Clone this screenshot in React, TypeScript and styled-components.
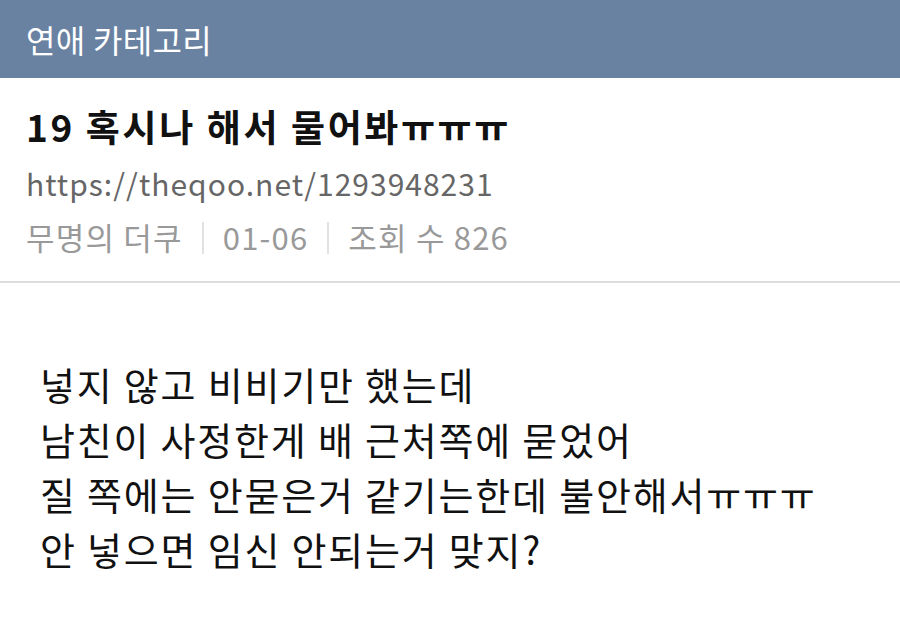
import * as React from "react";
import styled, { createGlobalStyle } from "styled-components";

const GlobalStyle = createGlobalStyle`
  html, body {
    margin: 0;
    padding: 0;
    background: #ffffff;
  }
  body {
    font-family: "Noto Sans CJK KR", "Noto Sans", sans-serif;
  }
`;

const post = {
  category: "연애 카테고리",
  title: "19 혹시나 해서 물어봐ㅠㅠㅠ",
  url: "https://theqoo.net/1293948231",
  author: "무명의 더쿠",
  date: "01-06",
  views: "조회 수 826",
  body: [
    "넣지 않고 비비기만 했는데",
    "남친이 사정한게 배 근처쪽에 묻었어",
    "질 쪽에는 안묻은거 같기는한데 불안해서ㅠㅠㅠ",
    "안 넣으면 임신 안되는거 맞지?",
  ],
};

function App() {
  return (
    <>
      <GlobalStyle />
      <Page>
        <Header>{post.category}</Header>
        <Info>
          <Title>{post.title}</Title>
          <Url>{post.url}</Url>
          <Meta>
            <span>{post.author}</span>
            <Sep />
            <span>{post.date}</span>
            <Sep />
            <span>{post.views}</span>
          </Meta>
        </Info>
        <Body>
          {post.body.map((line) => (
            <Line key={line}>{line}</Line>
          ))}
        </Body>
      </Page>
    </>
  );
}

export default App;

const Page = styled.div`
  width: 900px;
  min-height: 636px;
  background: #fff;
`;

const Header = styled.div`
  height: 78px;
  display: flex;
  align-items: center;
  padding: 0 26px;
  background: #6a82a1;
  color: #fff;
  font-size: 32px;
  letter-spacing: 0.3px;
`;

const Info = styled.div`
  padding: 20px 26px 19px;
  border-bottom: 2px solid #dddddd;
`;

const Title = styled.div`
  font-size: 37px;
  font-weight: 700;
  color: #111;
  line-height: 56px;
  letter-spacing: 2.6px;
`;

const Url = styled.div`
  font-size: 30px;
  color: #666;
  line-height: 58px;
  letter-spacing: 1px;
`;

const Meta = styled.div`
  display: flex;
  align-items: center;
  font-size: 31px;
  color: #999;
  line-height: 50px;
  letter-spacing: 1.2px;
`;

const Sep = styled.i`
  width: 2px;
  height: 32px;
  background: #e2e2e2;
  margin: 2px 19px 0;
`;

const Body = styled.div`
  padding: 73px 40px 40px;
`;

const Line = styled.div`
  font-size: 38px;
  color: #111;
  line-height: 55px;
  letter-spacing: 1.8px;
`;
